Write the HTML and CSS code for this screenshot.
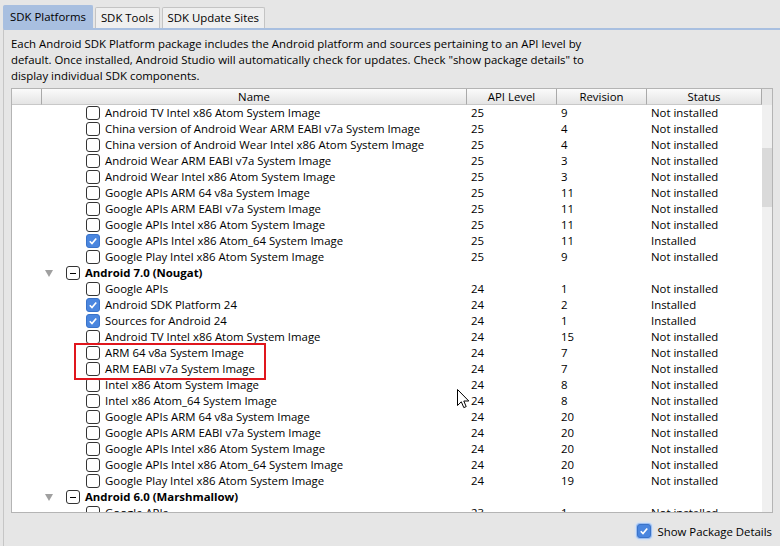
FILE: index.html
```html
<!DOCTYPE html>
<html>
<head>
<meta charset="utf-8">
<link rel="stylesheet" href="styles.css">
</head>
<body>
<div class="window">
  <div class="tabs">
    <div class="tab active">SDK Platforms</div>
    <div class="tab">SDK Tools</div>
    <div class="tab">SDK Update Sites</div>
  </div>
  <div class="panel">
    <p class="desc">Each Android SDK Platform package includes the Android platform and sources pertaining to an API level by<br>default. Once installed, Android Studio will automatically check for updates. Check "show package details" to<br>display individual SDK components.</p>
    <div class="table">
      <div class="thead">
        <div class="th th-tree"></div>
        <div class="th">Name</div>
        <div class="th">API Level</div>
        <div class="th">Revision</div>
        <div class="th">Status</div>
        <div class="th-corner"></div>
      </div>
      <div class="tbody-wrap">
        <div class="tbody">
          <div class="row"><div class="name"><span class="cb"></span>Android TV Intel x86 Atom System Image</div><div class="cell">25</div><div class="cell">9</div><div class="cell">Not installed</div></div>
          <div class="row"><div class="name"><span class="cb"></span>China version of Android Wear ARM EABI v7a System Image</div><div class="cell">25</div><div class="cell">4</div><div class="cell">Not installed</div></div>
          <div class="row"><div class="name"><span class="cb"></span>China version of Android Wear Intel x86 Atom System Image</div><div class="cell">25</div><div class="cell">4</div><div class="cell">Not installed</div></div>
          <div class="row"><div class="name"><span class="cb"></span>Android Wear ARM EABI v7a System Image</div><div class="cell">25</div><div class="cell">3</div><div class="cell">Not installed</div></div>
          <div class="row"><div class="name"><span class="cb"></span>Android Wear Intel x86 Atom System Image</div><div class="cell">25</div><div class="cell">3</div><div class="cell">Not installed</div></div>
          <div class="row"><div class="name"><span class="cb"></span>Google APIs ARM 64 v8a System Image</div><div class="cell">25</div><div class="cell">11</div><div class="cell">Not installed</div></div>
          <div class="row"><div class="name"><span class="cb"></span>Google APIs ARM EABI v7a System Image</div><div class="cell">25</div><div class="cell">11</div><div class="cell">Not installed</div></div>
          <div class="row"><div class="name"><span class="cb"></span>Google APIs Intel x86 Atom System Image</div><div class="cell">25</div><div class="cell">11</div><div class="cell">Not installed</div></div>
          <div class="row"><div class="name"><span class="cb checked"><svg viewBox="0 0 13 13"><path d="M3 6.8 L5.4 9.2 L10 3.8" fill="none" stroke="#fff" stroke-width="1.8"/></svg></span>Google APIs Intel x86 Atom_64 System Image</div><div class="cell">25</div><div class="cell">11</div><div class="cell">Installed</div></div>
          <div class="row"><div class="name"><span class="cb"></span>Google Play Intel x86 Atom System Image</div><div class="cell">25</div><div class="cell">9</div><div class="cell">Not installed</div></div>
          <div class="row group"><div class="name"><span class="tri"></span><span class="cb minus"></span>Android 7.0 (Nougat)</div><div class="cell"></div><div class="cell"></div><div class="cell"></div></div>
          <div class="row"><div class="name"><span class="cb"></span>Google APIs</div><div class="cell">24</div><div class="cell">1</div><div class="cell">Not installed</div></div>
          <div class="row"><div class="name"><span class="cb checked"><svg viewBox="0 0 13 13"><path d="M3 6.8 L5.4 9.2 L10 3.8" fill="none" stroke="#fff" stroke-width="1.8"/></svg></span>Android SDK Platform 24</div><div class="cell">24</div><div class="cell">2</div><div class="cell">Installed</div></div>
          <div class="row"><div class="name"><span class="cb checked"><svg viewBox="0 0 13 13"><path d="M3 6.8 L5.4 9.2 L10 3.8" fill="none" stroke="#fff" stroke-width="1.8"/></svg></span>Sources for Android 24</div><div class="cell">24</div><div class="cell">1</div><div class="cell">Installed</div></div>
          <div class="row"><div class="name"><span class="cb"></span>Android TV Intel x86 Atom System Image</div><div class="cell">24</div><div class="cell">15</div><div class="cell">Not installed</div></div>
          <div class="row"><div class="name"><span class="cb"></span>ARM 64 v8a System Image</div><div class="cell">24</div><div class="cell">7</div><div class="cell">Not installed</div></div>
          <div class="row"><div class="name"><span class="cb"></span>ARM EABI v7a System Image</div><div class="cell">24</div><div class="cell">7</div><div class="cell">Not installed</div></div>
          <div class="row"><div class="name"><span class="cb"></span>Intel x86 Atom System Image</div><div class="cell">24</div><div class="cell">8</div><div class="cell">Not installed</div></div>
          <div class="row"><div class="name"><span class="cb"></span>Intel x86 Atom_64 System Image</div><div class="cell">24</div><div class="cell">8</div><div class="cell">Not installed</div></div>
          <div class="row"><div class="name"><span class="cb"></span>Google APIs ARM 64 v8a System Image</div><div class="cell">24</div><div class="cell">20</div><div class="cell">Not installed</div></div>
          <div class="row"><div class="name"><span class="cb"></span>Google APIs ARM EABI v7a System Image</div><div class="cell">24</div><div class="cell">20</div><div class="cell">Not installed</div></div>
          <div class="row"><div class="name"><span class="cb"></span>Google APIs Intel x86 Atom System Image</div><div class="cell">24</div><div class="cell">20</div><div class="cell">Not installed</div></div>
          <div class="row"><div class="name"><span class="cb"></span>Google APIs Intel x86 Atom_64 System Image</div><div class="cell">24</div><div class="cell">20</div><div class="cell">Not installed</div></div>
          <div class="row"><div class="name"><span class="cb"></span>Google Play Intel x86 Atom System Image</div><div class="cell">24</div><div class="cell">19</div><div class="cell">Not installed</div></div>
          <div class="row group"><div class="name"><span class="tri"></span><span class="cb minus"></span>Android 6.0 (Marshmallow)</div><div class="cell"></div><div class="cell"></div><div class="cell"></div></div>
          <div class="row"><div class="name"><span class="cb"></span>Google APIs</div><div class="cell">23</div><div class="cell">1</div><div class="cell">Not installed</div></div>
        </div>
        <div class="scrollbar"><div class="thumb"></div></div>
      </div>
    </div>
    <div class="footer">
      <span class="cb checked focus"><svg viewBox="0 0 13 13"><path d="M3 6.8 L5.4 9.2 L10 3.8" fill="none" stroke="#fff" stroke-width="1.8"/></svg></span>
      <span class="footer-label">Show Package Details</span>
    </div>
  </div>
  <div class="highlight"></div>
  <svg class="cursor" width="13" height="20" viewBox="0 0 13 20"><path d="M0.5 0.5 L0.5 16.5 L4.3 12.8 L6.8 18.6 L9.2 17.6 L6.8 12 L11.8 12 Z" fill="#fff" stroke="#000" stroke-width="1" stroke-linejoin="round"/></svg>
</div>
</body>
</html>
```

FILE: styles.css
```css
* { box-sizing: border-box; }
html, body { margin: 0; padding: 0; }
body {
  background: #e6e6e6;
  font-family: "Open Sans", "Noto Sans", "DejaVu Sans", sans-serif;
  font-size: 11.4px;
  color: #000;
  width: 780px;
  height: 546px;
  overflow: hidden;
}
.window { position: relative; width: 780px; height: 546px; }

.tabs {
  display: flex;
  align-items: flex-end;
  gap: 2px;
  height: 28px;
  padding-left: 3px;
}
.tab {
  height: 21px;
  padding: 0 5px;
  line-height: 19px;
  border: 1px solid #c4c4c4;
  border-bottom: none;
  border-radius: 2px 2px 0 0;
  background: #efefef;
}
.tab.active {
  height: 23px;
  line-height: 21px;
  background: #a8bfe0;
  border-color: #a8bfe0;
  padding: 0 6px;
}

.panel {
  margin-left: 3px;
  border-top: 2px solid #a8bfe0;
  border-left: 1px solid #c6c6c6;
  height: 518px;
  padding: 6px 0 0 7px;
}
.desc {
  margin: 0;
  line-height: 16px;
  white-space: nowrap;
}

.table {
  margin-top: 4px;
  width: 762px;
  height: 425px;
  border: 1px solid #b4b4b4;
  background: #e6e6e6;
  display: flex;
  flex-direction: column;
}
.thead {
  display: grid;
  grid-template-columns: 30px 425px 90px 90px 115px 10px;
  height: 16px;
  flex: none;
}
.th {
  background: linear-gradient(#fbfbfb, #e4e4e4);
  border-right: 1px solid #a9a9a9;
  border-bottom: 1px solid #c8c8c8;
  text-align: center;
  line-height: 15px;
}
.th-corner { background: #e6e6e6; }

.tbody-wrap {
  flex: 1;
  display: flex;
  overflow: hidden;
  min-height: 0;
}
.tbody {
  width: 750px;
  background: #fff;
  overflow: hidden;
}
.scrollbar {
  width: 10px;
  background: #f0f0f0;
  padding-top: 43px;
}
.thumb {
  height: 59px;
  background: #dadada;
}

.row {
  display: grid;
  grid-template-columns: 455px 90px 90px 115px;
  height: 16px;
  line-height: 16px;
  white-space: nowrap;
}
.name {
  display: flex;
  align-items: center;
  padding-left: 74px;
}
.cell { padding-left: 4px; }
.group .name { padding-left: 33px; font-weight: bold; }

.cb {
  display: inline-block;
  flex: none;
  width: 14px;
  height: 14px;
  border: 1px solid #333;
  border-radius: 3px;
  background: #fff;
  margin-right: 5px;
  position: relative;
}
.cb svg { display: block; width: 12px; height: 12px; }
.cb.checked { background: #4a86df; border-color: #3a73c9; }
.cb.minus::after {
  content: "";
  position: absolute;
  left: 3px;
  top: 6px;
  width: 6px;
  height: 1px;
  background: #000;
}
.tri {
  width: 0;
  height: 0;
  border-left: 4px solid transparent;
  border-right: 4px solid transparent;
  border-top: 7px solid #a0a0a0;
  margin-right: 13px;
}
.group .cb { margin-right: 5px; }

.footer {
  display: flex;
  justify-content: flex-end;
  align-items: center;
  height: 36px;
  padding-right: 8px;
}
.footer .cb { margin-right: 6px; }
.cb.focus { box-shadow: 0 0 0 1px #9dbff0, 0 0 2px 2px #cfe0f8; }

.highlight {
  position: absolute;
  left: 74px;
  top: 343px;
  width: 192px;
  height: 37px;
  border: 2px solid #e0161d;
}
.cursor {
  position: absolute;
  left: 457px;
  top: 389px;
}
```
